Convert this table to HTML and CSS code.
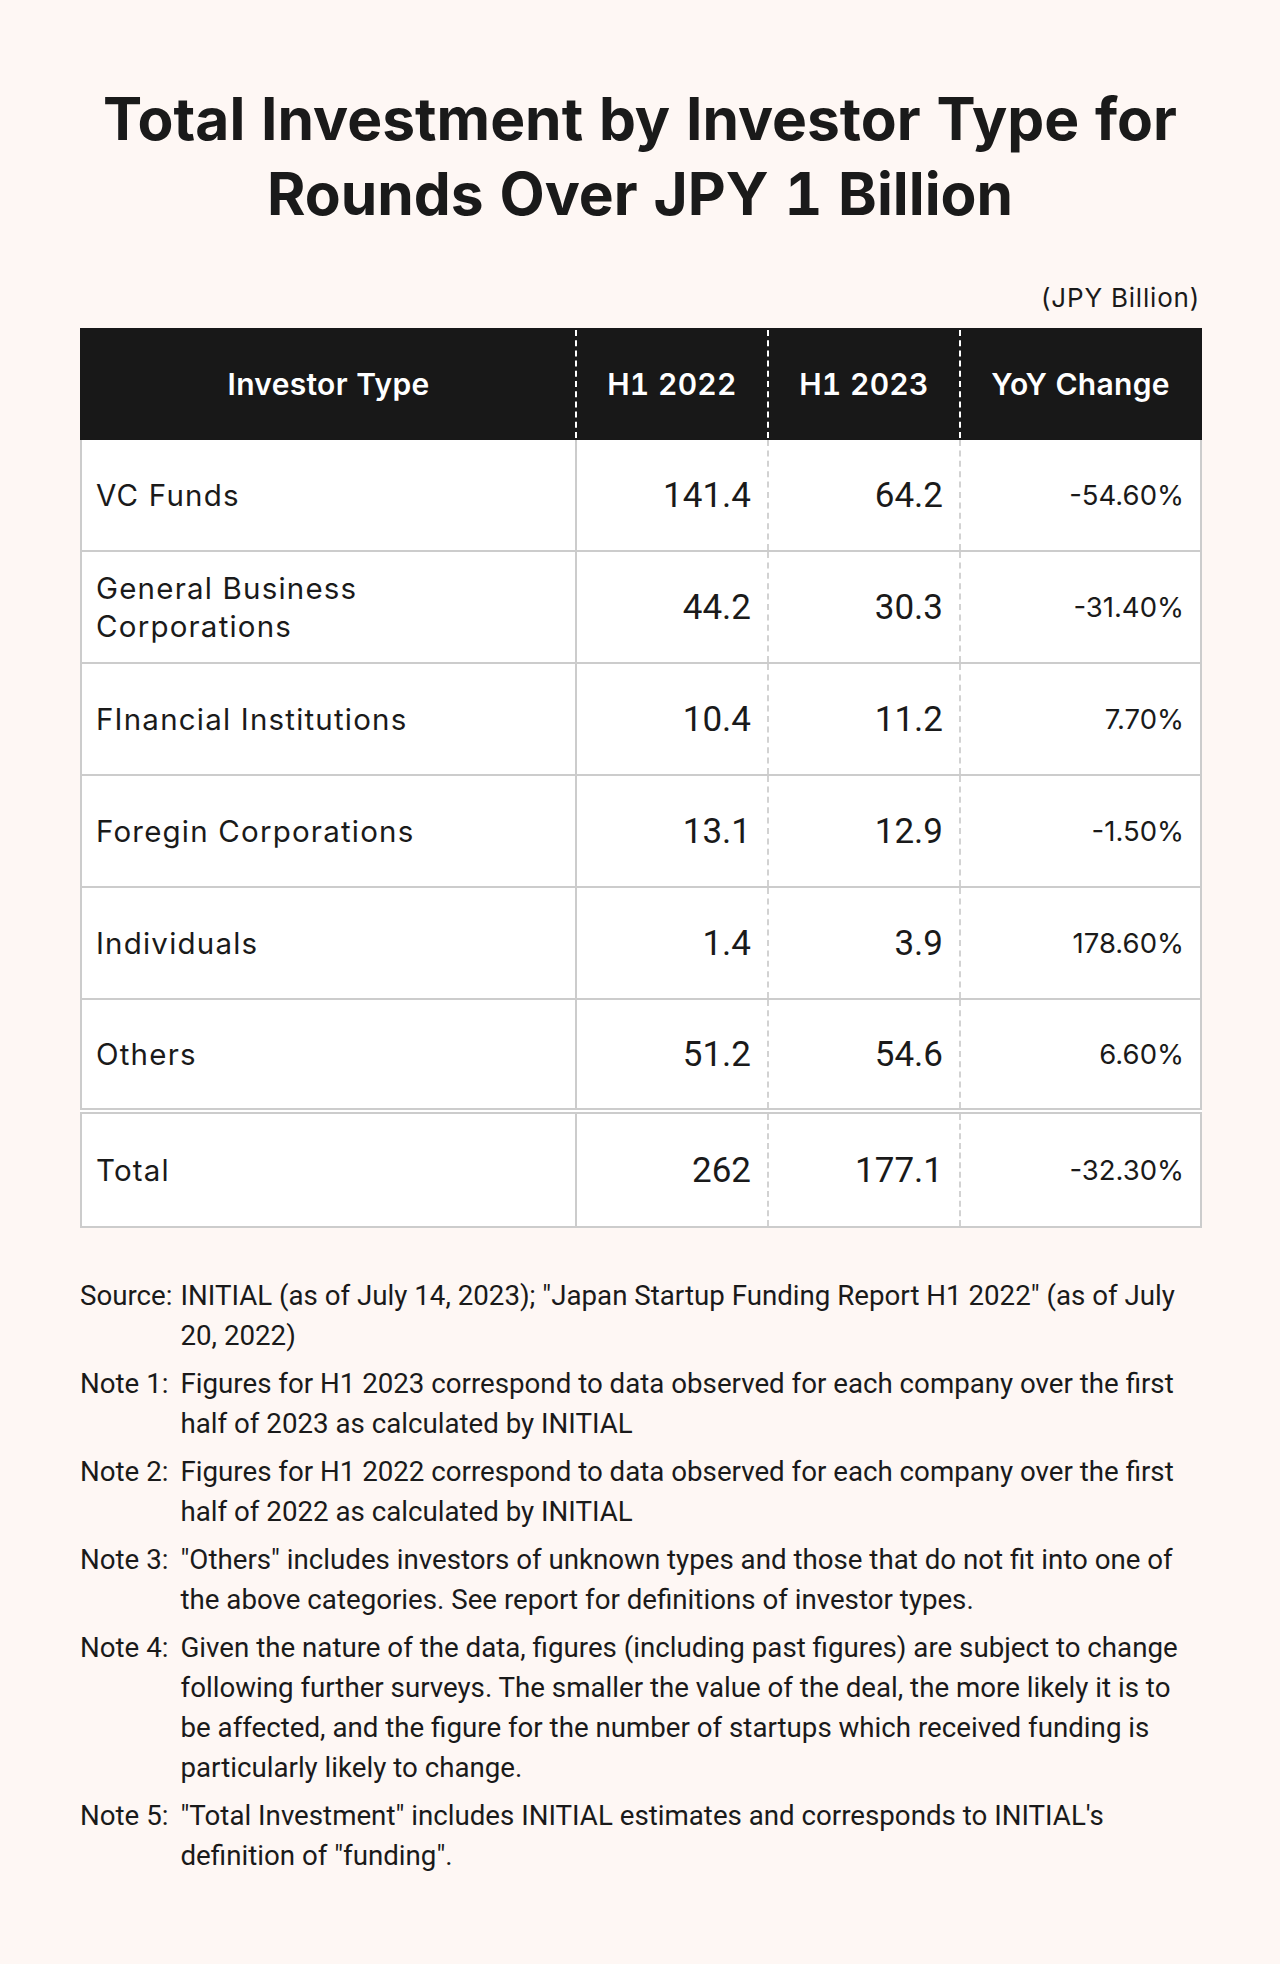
FILE: index.html
```html
<!DOCTYPE html>
<html lang="en">
<head>
<meta charset="utf-8">
<title>Total Investment by Investor Type for Rounds Over JPY 1 Billion</title>
<link rel="stylesheet" href="styles.css">
</head>
<body>
<main class="page">
  <h1 class="title">Total Investment by Investor Type for<br>Rounds Over JPY 1 Billion</h1>
  <p class="unit">(JPY Billion)</p>
  <table class="data">
    <colgroup>
      <col class="c-type">
      <col class="c-num">
      <col class="c-num">
      <col class="c-yoy">
    </colgroup>
    <thead>
      <tr>
        <th>Investor Type</th>
        <th>H1 2022</th>
        <th>H1 2023</th>
        <th>YoY Change</th>
      </tr>
    </thead>
    <tbody>
      <tr><td class="label">VC Funds</td><td class="num">141.4</td><td class="num">64.2</td><td class="pct">-54.60%</td></tr>
      <tr><td class="label">General Business<br>Corporations</td><td class="num">44.2</td><td class="num">30.3</td><td class="pct">-31.40%</td></tr>
      <tr><td class="label">FInancial Institutions</td><td class="num">10.4</td><td class="num">11.2</td><td class="pct">7.70%</td></tr>
      <tr><td class="label">Foregin Corporations</td><td class="num">13.1</td><td class="num">12.9</td><td class="pct">-1.50%</td></tr>
      <tr><td class="label">Individuals</td><td class="num">1.4</td><td class="num">3.9</td><td class="pct">178.60%</td></tr>
      <tr><td class="label">Others</td><td class="num">51.2</td><td class="num">54.6</td><td class="pct">6.60%</td></tr>
    </tbody>
    <tfoot>
      <tr class="total"><td class="label">Total</td><td class="num">262</td><td class="num">177.1</td><td class="pct">-32.30%</td></tr>
    </tfoot>
  </table>
  <dl class="notes">
    <dt>Source:</dt>
    <dd>INITIAL (as of July 14, 2023); "Japan Startup Funding Report H1 2022" (as of July 20, 2022)</dd>
    <dt>Note 1:</dt>
    <dd>Figures for H1 2023 correspond to data observed for each company over the first half of 2023 as calculated by INITIAL</dd>
    <dt>Note 2:</dt>
    <dd>Figures for H1 2022 correspond to data observed for each company over the first half of 2022 as calculated by INITIAL</dd>
    <dt>Note 3:</dt>
    <dd>"Others" includes investors of unknown types and those that do not fit into one of the above categories. See report for definitions of investor types.</dd>
    <dt>Note 4:</dt>
    <dd>Given the nature of the data, figures (including past figures) are subject to change following further surveys. The smaller the value of the deal, the more likely it is to be affected, and the figure for the number of startups which received funding is particularly likely to change.</dd>
    <dt>Note 5:</dt>
    <dd>"Total Investment" includes INITIAL estimates and corresponds to INITIAL's definition of "funding".</dd>
  </dl>
</main>
</body>
</html>
```

FILE: styles.css
```css
* {
  box-sizing: border-box;
}

body {
  margin: 0;
  background: #fef7f4;
  color: #1a1a1a;
  font-family: Roboto, "Liberation Sans", sans-serif;
}

.page {
  width: 1120px;
  margin: 0 auto;
  padding-top: 81px;
}

.title {
  margin: 0;
  font-family: Inter, Roboto, "Liberation Sans", sans-serif;
  font-weight: 700;
  font-size: 58.7px;
  line-height: 75px;
  font-variant-numeric: tabular-nums;
  text-align: center;
  color: #1a1a1a;
}

.unit {
  margin: 52px 0 15px;
  font-family: Inter, Roboto, sans-serif;
  font-size: 26px;
  line-height: 30px;
  letter-spacing: 0.8px;
  text-align: right;
}

.data {
  width: 100%;
  border-collapse: collapse;
  table-layout: fixed;
  background: #fff;
  border: 2px solid #cccccc;
}

.c-type { width: 495px; }
.c-num { width: 192px; }
.c-yoy { width: 241px; }

.data th {
  height: 110px;
  padding: 0 16px;
  background: #181818;
  color: #fff;
  font-family: Inter, Roboto, sans-serif;
  font-size: 30px;
  font-weight: 600;
  letter-spacing: 0.3px;
  font-variant-numeric: tabular-nums;
  text-align: center;
  border-top: 2px solid #181818;
  border-bottom: 2px solid #181818;
  border-left: 2px dashed #ffffff;
}

.data th:first-child {
  border-left: 2px solid #181818;
}

.data th:last-child {
  border-right: 2px solid #181818;
}

.data td {
  height: 112px;
  padding: 0 16px;
  border-bottom: 2px solid #cccccc;
  border-left: 2px dashed #d2d2d2;
  vertical-align: middle;
}

.data td.label {
  border-left: 2px solid #cccccc;
  border-right: 2px solid #cccccc;
  padding-left: 14px;
  font-family: Inter, Roboto, sans-serif;
  font-size: 29.5px;
  line-height: 38px;
  letter-spacing: 1.2px;
  text-align: left;
}

.data td.num {
  font-size: 35px;
  text-align: right;
}

.data td.pct {
  font-family: Inter, Roboto, sans-serif;
  font-size: 27.5px;
  text-align: right;
}

.data .total td {
  height: 116px;
  border-top: 6px double #cccccc;
}

.notes {
  display: grid;
  grid-template-columns: auto 1fr;
  column-gap: 8px;
  row-gap: 8px;
  margin: 48px 0 0;
  font-size: 27.7px;
  line-height: 40px;
}

.notes dt,
.notes dd {
  margin: 0;
}
```
